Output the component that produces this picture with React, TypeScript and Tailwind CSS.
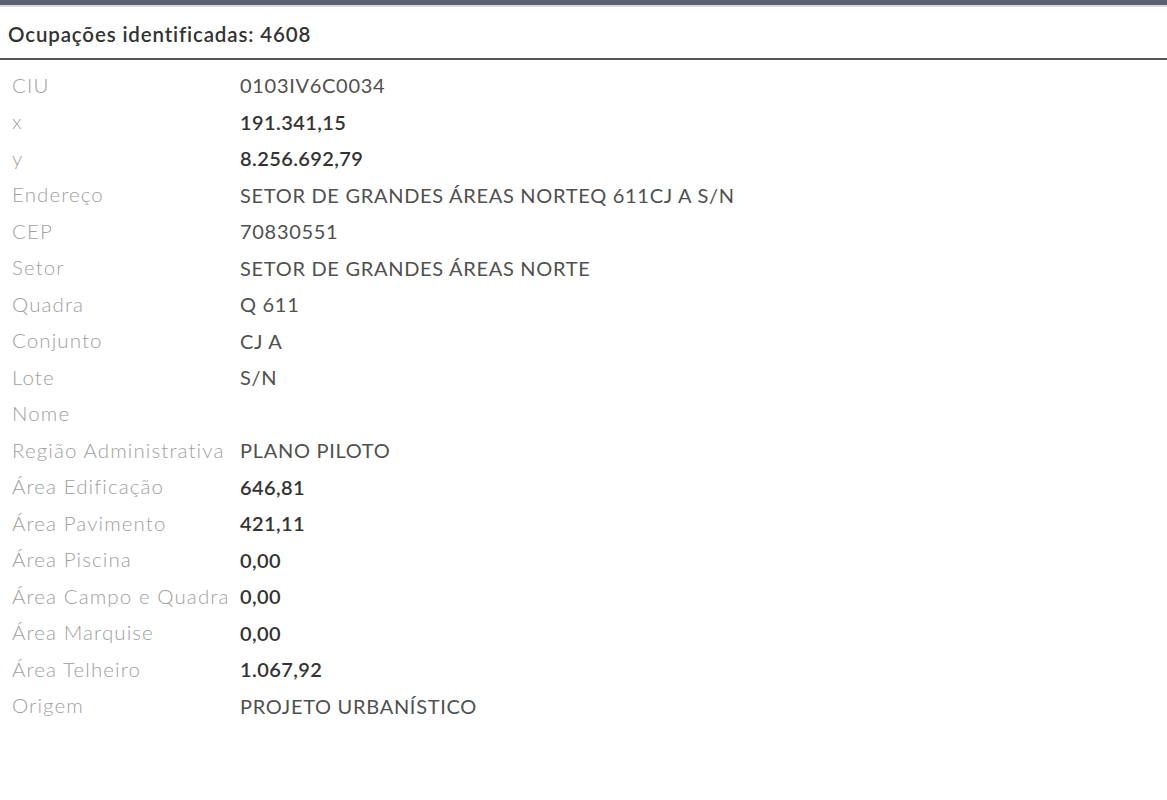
const rows: [string, string, boolean][] = [
  ['CIU', '0103IV6C0034', false],
  ['x', '191.341,15', true],
  ['y', '8.256.692,79', true],
  ['Endereço', 'SETOR DE GRANDES ÁREAS NORTEQ 611CJ A S/N', false],
  ['CEP', '70830551', false],
  ['Setor', 'SETOR DE GRANDES ÁREAS NORTE', false],
  ['Quadra', 'Q 611', false],
  ['Conjunto', 'CJ A', false],
  ['Lote', 'S/N', false],
  ['Nome', '', false],
  ['Região Administrativa', 'PLANO PILOTO', false],
  ['Área Edificação', '646,81', true],
  ['Área Pavimento', '421,11', true],
  ['Área Piscina', '0,00', true],
  ['Área Campo e Quadra', '0,00', true],
  ['Área Marquise', '0,00', true],
  ['Área Telheiro', '1.067,92', true],
  ['Origem', 'PROJETO URBANÍSTICO', false],
]

export default function App() {
  return (
    <div className="h-[800px] w-[1167px] bg-white font-['Lato',sans-serif]">
      <div className="h-[5px] bg-[#5c6070]" />
      <div className="h-[2px] bg-[#d6d8dc]" />
      <div className="border-b-2 border-[#555]">
        <h2 className="flex h-[51px] items-center px-[8px] pt-[3px] text-[20.5px] font-semibold tracking-[0.85px] text-[#333]">
          Ocupações identificadas: 4608
        </h2>
      </div>
      <div className="pt-[7px]">
        {rows.map(([label, value, bold]) => (
          <div key={label} className="flex h-[36.5px] items-center text-[20px]">
            <div className="w-[240px] shrink-0 whitespace-nowrap pl-[12px] text-[20.5px] font-light tracking-[1.1px] text-[#a0a0a0]">{label}</div>
            <div
              className={
                bold
                  ? 'font-semibold tracking-[0.4px] text-[#333]'
                  : 'font-normal tracking-[0.7px] text-[#505050]'
              }
            >
              {value}
            </div>
          </div>
        ))}
      </div>
    </div>
  )
}
